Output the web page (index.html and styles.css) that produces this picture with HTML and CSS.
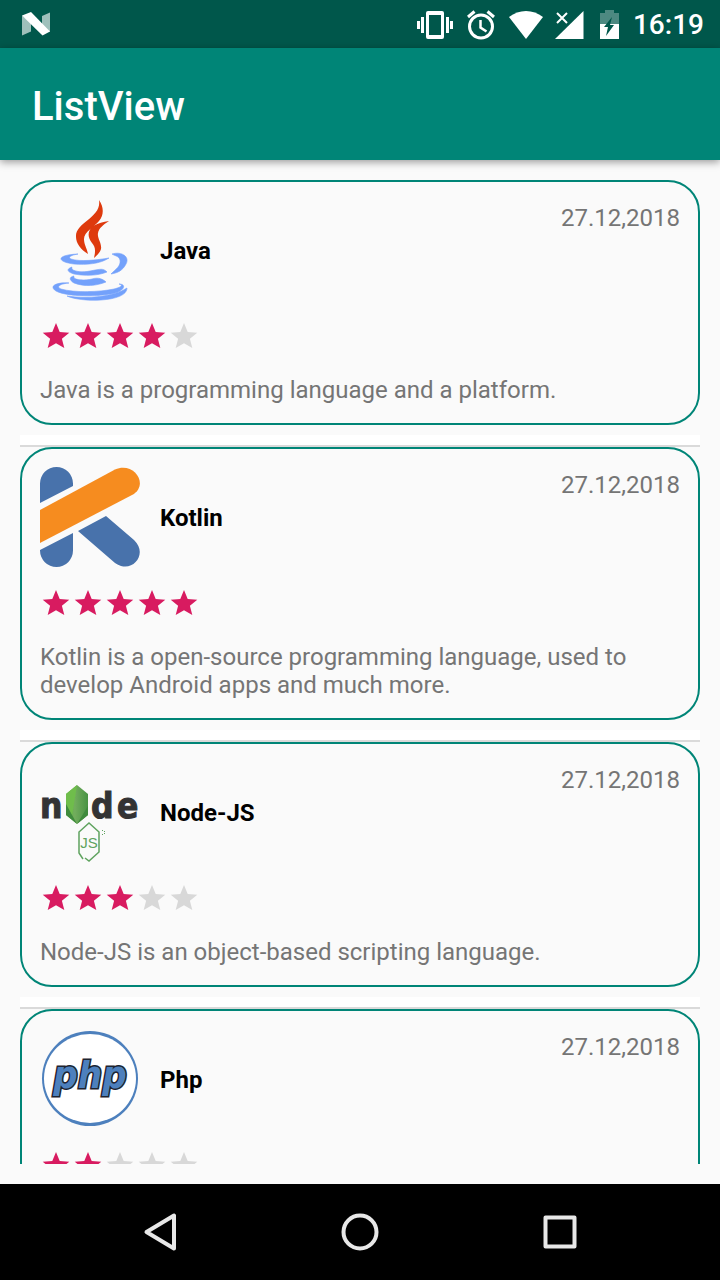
FILE: index.html
```html
<!DOCTYPE html>
<html lang="en">
<head>
<meta charset="utf-8">
<meta name="viewport" content="width=device-width, initial-scale=1">
<title>ListView</title>
<link rel="stylesheet" href="styles.css">
</head>
<body>
<svg class="defs" aria-hidden="true">
  <symbol id="star" viewBox="0 0 32 32"><path d="M16 3l3.700 9 9.600.7-7.400 6.100L24.300 28 16 23.200 7.700 28l2.400-9.200-7.400-6.100 9.600-.7z"/></symbol>
</svg>
<div class="app">
  <header class="status">
    <svg class="notice" width="28" height="24" viewBox="0 0 28 24" aria-hidden="true">
      <path fill="#9fc0bb" d="M0 3.500L9 10V19.500L0 23.500zM20 4l8-3.500V20L20 14z"/>
      <path fill="#fff" d="M0 3.500L9 0 28 19.500 20.500 23.500z"/>
    </svg>
    <div class="status-icons">
      <svg width="38" height="30" viewBox="0 0 38 30" fill="#fff" aria-hidden="true">
        <path fill-rule="evenodd" d="M11 1h14q2 0 2 2v24q0 2-2 2H11q-2 0-2-2V3q0-2 2-2zm1 4v20h12V5zM4 7h3v16H4zM0 11h3v8H0zM29 7h3v16h-3zM33 11h3v8h-3z"/>
      </svg>
      <svg width="30" height="30" viewBox="0 0 30 30" fill="none" stroke="#fff" stroke-width="3" aria-hidden="true">
        <circle cx="14" cy="16.500" r="11.500"/><path stroke-width="2.500" d="M13.500 10v7.500l6 4"/><path d="M1 7l6.500-5.500M20.500 1.500L27 7"/>
      </svg>
      <svg width="34" height="30" viewBox="0 0 34 30" fill="#fff" aria-hidden="true"><path d="M0 7C10-1 24-1 34 7L17 29z"/></svg>
      <svg width="33" height="30" viewBox="0 0 33 30" aria-hidden="true"><path fill="#fff" d="M28.500 1v28H0z"/><path stroke="#fff" stroke-width="2" d="M2 3l10 10M12 3L2 13"/></svg>
      <svg width="21" height="30" viewBox="0 0 21 30" aria-hidden="true"><path fill="#4d8981" d="M5 0h9v3h5v11H0V3h5z"/><path fill="#fff" d="M0 14h19v15H0z"/><path fill="#00574b" d="M12 7L4 17h4l-2 9 8-11h-4z"/></svg>
      <time class="clock">16:19</time>
    </div>
  </header>
  <div class="toolbar"><h1>ListView</h1></div>
  <main class="content">
    <ul class="list">
      <li class="item"><article class="card">
        <div class="head">
          <svg class="logo" viewBox="0 0 100 100" role="img" aria-label="Java logo">
            <path fill="#de3a0d" d="M59 0C64 7 64 15 59 21C54 27 44 32 44 39C44 45 47 48 48 54C41 50 36 43 36 37C35 22 62 18 59 0zM69 21C63 25 59 28 58 33C57 38 62 43 61 49C60 53 57 55 54 58C56 49 55 47 52 43C43 31 53 23 69 21z"/>
            <g fill="#73a1fb"><path d="M38 54C32 55 27 57 31 59C40 62 57 60 69 58C60 64 46 65 34 64C17 62 15 55 38 54zM72 54C82 51 90 57 86 64C83 70 78 73 71 74C76 69 81 66 80 60C79 56 75 56 72 54zM32 67C30 71 41 73 50 71C61 69 63 68 67 72C57 76 45 76 34 74C27 72 26 69 32 67zM34 76C32 80 44 81 52 79C58 77 63 79 66 82C56 86 45 87 34 83C29 80 29 77 34 76zM29 83C19 84 16 87 21 89C35 93 60 92 74 89C82 87 83 85 79 84C87 84 84 91 75 93C59 97 27 97 16 91C8 86 17 82 29 83zM87 88C87 95 76 99 61 100C48 101 33 99 27 96C47 99 74 97 87 88z" stroke="#73a1fb" stroke-width=".6"/></g>
          </svg>
          <h2>Java</h2><time class="date">27.12,2018</time>
        </div>
        <div class="stars" role="img" aria-label="4 of 5 stars"><svg class="on"><use href="#star"/></svg><svg class="on"><use href="#star"/></svg><svg class="on"><use href="#star"/></svg><svg class="on"><use href="#star"/></svg><svg><use href="#star"/></svg></div>
        <p>Java is a programming language and a platform.</p>
      </article></li>
      <li class="item"><article class="card">
        <div class="head">
          <svg class="logo" viewBox="0 0 100 100" role="img" aria-label="Kotlin logo">
            <path fill="#4872ab" d="M0 36V16.500a16.500 16.500 0 0 1 33 0V19zM0 83l33-17v17.500a16.500 16.500 0 0 1-33 0zM38 64l28-15 28 24c13 12 2 30-13 26q-3-1-6-3z"/>
            <path fill="#f68c1f" d="M0 43L75 2.500C94-6 110 18 92 28L0 76z"/>
          </svg>
          <h2>Kotlin</h2><time class="date">27.12,2018</time>
        </div>
        <div class="stars" role="img" aria-label="5 of 5 stars"><svg class="on"><use href="#star"/></svg><svg class="on"><use href="#star"/></svg><svg class="on"><use href="#star"/></svg><svg class="on"><use href="#star"/></svg><svg class="on"><use href="#star"/></svg></div>
        <p>Kotlin is a open-source programming language, used to develop Android apps and much more.</p>
      </article></li>
      <li class="item"><article class="card">
        <div class="head">
          <svg class="logo" viewBox="0 0 100 100" role="img" aria-label="Node JS logo">
            <defs><linearGradient id="leaf" x1="0" x2="1"><stop offset="0" stop-color="#5faf45"/><stop offset=".4" stop-color="#72ad5d"/><stop offset="1" stop-color="#489344"/></linearGradient></defs>
            <g class="node-word"><text x="0" y="56">n</text><text x="51" y="56">d</text><text x="77" y="56">e</text></g>
            <path fill="url(#leaf)" d="M37 23l11 9v21l-11 9-11-9V32z"/>
            <path fill="#6fbd4b" d="M37 23l-11 9v11l6 11z"/><path fill="#3f8b3d" d="M26 42l11 20-11-9zM48 44L37 62l11-9z"/>
            <path fill="none" stroke="#5fa35f" stroke-width="1.500" d="M43 97l-4-6V70l10-9 10 9v20l-10 9-4-3"/>
            <text class="node-js" x="49" y="86" text-anchor="middle">JS</text>
            <path fill="#5fa35f" d="M62 68h1v1h-1zm2 1h1v1h-1zm-2 3h1v1h-1zm2-1h1v1h-1z"/>
          </svg>
          <h2>Node-JS</h2><time class="date">27.12,2018</time>
        </div>
        <div class="stars" role="img" aria-label="3 of 5 stars"><svg class="on"><use href="#star"/></svg><svg class="on"><use href="#star"/></svg><svg class="on"><use href="#star"/></svg><svg><use href="#star"/></svg><svg><use href="#star"/></svg></div>
        <p>Node-JS is an object-based scripting language.</p>
      </article></li>
      <li class="item"><article class="card">
        <div class="head">
          <svg class="logo" viewBox="0 0 100 100" role="img" aria-label="PHP logo">
            <ellipse cx="50" cy="49.500" rx="48" ry="47.500" fill="#4d80bd"/><ellipse cx="50" cy="49.500" rx="46" ry="44.500" fill="#fff"/>
            <text class="php-word" x="50" y="59" text-anchor="middle">php</text>
          </svg>
          <h2>Php</h2><time class="date">27.12,2018</time>
        </div>
        <div class="stars" role="img" aria-label="2 of 5 stars"><svg class="on"><use href="#star"/></svg><svg class="on"><use href="#star"/></svg><svg><use href="#star"/></svg><svg><use href="#star"/></svg><svg><use href="#star"/></svg></div>
      </article></li>
    </ul>
  </main>
  <nav class="navbar" aria-label="System">
    <button type="button" aria-label="Back"><svg viewBox="0 0 40 40"><path d="M34 3.500v33L6.500 20z"/></svg></button>
    <button type="button" aria-label="Home"><svg viewBox="0 0 40 40"><circle cx="20" cy="20" r="16.500"/></svg></button>
    <button type="button" aria-label="Recent apps"><svg viewBox="0 0 40 40"><rect x="5.500" y="5.500" width="29" height="29"/></svg></button>
  </nav>
</div>
</body>
</html>
```
FILE: styles.css
```css
*, *::before { box-sizing: border-box; }
body { margin: 0; background: #fafafa; font-family: Roboto, "Liberation Sans", sans-serif; }
h1, h2, p, ul { margin: 0; padding: 0; }
.defs { display: none; }
.app { display: flex; flex-direction: column; height: 100vh; }

.status { display: flex; flex: none; align-items: center; justify-content: space-between; height: 48px; padding: 0 16px 0 22px; background: #00574b; color: #fff; }
.status-icons { display: flex; align-items: center; gap: 12px; padding-top: 2px; }
.clock { font-size: 28px; font-weight: 500; line-height: 32px; }

.toolbar { z-index: 1; display: flex; flex: none; align-items: center; height: 112px; padding: 6px 32px 0; background: #008577; box-shadow: 0 2px 8px rgba(0, 0, 0, .4); color: #fff; }
.toolbar h1 { font-size: 40px; font-weight: 500; line-height: 48px; }

.content { flex: 1; min-height: 0; padding: 20px; }
.list { height: 100%; overflow-y: auto; scrollbar-width: none; list-style: none; }
.item { padding-bottom: 10px; }
.item + .item::before { content: ""; display: block; height: 12px; background: #fff; border-bottom: 2px solid #dadada; }
.card { padding: 18px; border: 2px solid #008577; border-radius: 32px; background: #fafafa; }
.head { display: flex; align-items: center; gap: 20px; }
.logo { flex: none; width: 100px; height: 100px; overflow: visible; }
.head h2 { flex: 1; padding-top: 2px; color: #000; font-size: 24px; font-weight: 700; line-height: 28px; }
.date { align-self: flex-start; padding-top: 4px; color: #757575; font-size: 24px; line-height: 28px; }
.stars { display: flex; margin: 20px 0 24px; }
.stars svg { width: 32px; height: 32px; fill: #d8d8d8; }
.stars .on { fill: #d81b60; }
.card p { padding-bottom: 1px; color: #757575; font-size: 24px; line-height: 28px; }

.node-word { fill: #333; stroke: #333; stroke-width: 1px; font: bold 35px "DejaVu Sans Condensed", sans-serif; }
.node-js { fill: #5fa35f; font: 15px "Liberation Sans", sans-serif; }
.php-word { fill: #4d80bd; stroke: #1d2430; stroke-width: 3px; paint-order: stroke; font: italic bold 38px "DejaVu Sans Condensed", sans-serif; }

.navbar { display: flex; flex: none; align-items: center; justify-content: center; gap: 104px; height: 96px; background: #000; }
.navbar button { display: flex; align-items: center; justify-content: center; width: 96px; height: 96px; padding: 0; border: 0; background: none; }
.navbar svg { width: 40px; height: 40px; fill: none; stroke: #e8e8e8; stroke-width: 4px; stroke-linejoin: round; }
```
